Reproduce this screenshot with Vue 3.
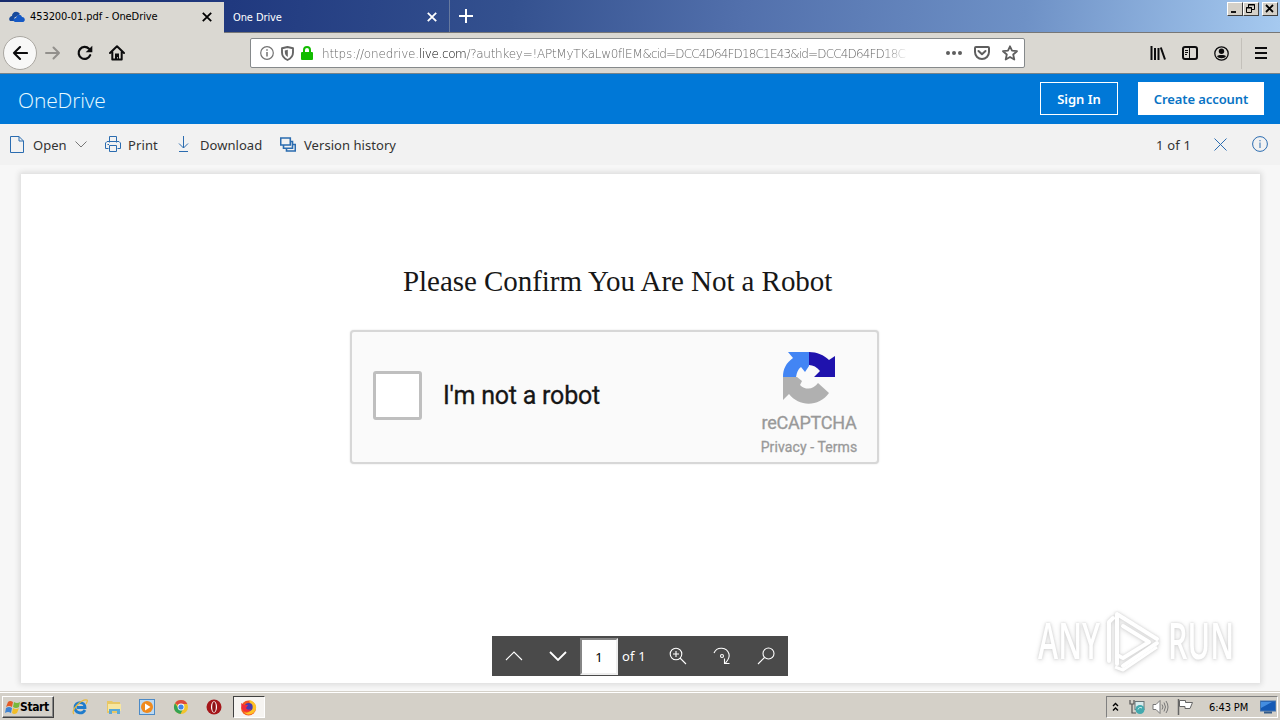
<template>
  <div class="screen">
    <header class="tabs">
      <div class="tab active">
        <svg class="cloud" width="16" height="12" viewBox="0 0 16 12">
          <path d="M1 10C-1 8 1 5 3 5C3 1 8-1 11 3L8 5L5 7V10Z" fill="#174a9c" />
          <path d="M6 11C3 10 4 7 7 7C8 3 12 3 13 6C16 6 17 10 14 11Z" fill="#1559c5" />
        </svg>
        <span class="tab-title t1">453200-01.pdf - OneDrive</span>
        <svg class="close" width="10" height="10" viewBox="0 0 10 10"><path d="M.8.8 9.2 9.2M9.2.8.8 9.2" /></svg>
      </div>
      <div class="tab other">
        <span class="tab-title t2">One Drive</span>
        <svg class="close" width="10" height="10" viewBox="0 0 10 10"><path d="M.8.8 9.2 9.2M9.2.8.8 9.2" /></svg>
      </div>
      <svg class="plus" width="14" height="14" viewBox="0 0 14 14"><path d="M7 0V14M0 7H14" /></svg>
      <div class="win-buttons">
        <span class="win"><svg width="13" height="11" viewBox="0 0 13 11"><path d="M3 9H8" /></svg></span>
        <span class="win"><svg width="13" height="11" viewBox="0 0 13 11"><path class="thin" d="M4.5 4V1.5H10.5V6.5H8M4 2H11M2.5 4.5H7.5V9.5H2.5ZM2 5H8" /></svg></span>
        <span class="win last"><svg width="13" height="11" viewBox="0 0 13 11"><path d="M3 2 10 9M10 2 3 9" /></svg></span>
      </div>
    </header>

    <nav class="nav">
      <span class="back">
        <svg width="16" height="16" viewBox="0 0 16 16"><path d="M15 8H2M8 2 2 8 8 14" fill="none" stroke="#0c0c0d" stroke-width="2.1" stroke-linecap="round" stroke-linejoin="round" /></svg>
      </span>
      <svg class="forward" width="16" height="16" viewBox="0 0 16 16"><path d="M1 8H14M8.5 2.5 14 8 8.5 13.5" fill="none" stroke="#92908c" stroke-width="2" stroke-linecap="round" stroke-linejoin="round" /></svg>
      <svg class="reload" width="16" height="16" viewBox="0 0 16 16">
        <path d="M13.2 10.2A6 6 0 1 1 12 3.8" fill="none" stroke="#0c0c0d" stroke-width="2.2" stroke-linecap="round" />
        <path d="M15.3.7V7.3H8.7Z" fill="#0c0c0d" />
      </svg>
      <svg class="home" width="16" height="16" viewBox="0 0 16 16">
        <path d="M1 8 8 1.3 15 8M3.3 7V14.6H12.7V7" fill="none" stroke="#0c0c0d" stroke-width="2" stroke-linejoin="round" stroke-linecap="round" />
        <path d="M6 15V8.5H10V15H8.8V12H8V15Z" fill="#0c0c0d" />
      </svg>
      <div class="urlbar">
        <svg width="14" height="14" viewBox="0 0 14 14"><circle cx="7" cy="7" r="6.3" fill="none" stroke="#737373" stroke-width="1.2" /><path d="M7 6V10.5M7 3.2V4.8" stroke="#737373" stroke-width="1.5" /></svg>
        <svg class="shield" width="13" height="15" viewBox="0 0 13 15"><path d="M6.5 1 12 2.2V6.5C12 10 9.8 12.5 6.5 14C3.2 12.5 1 10 1 6.5V2.2Z" fill="none" stroke="#666" stroke-width="1.9" stroke-linejoin="round" /><path d="M6.8 3.8V11C4.8 10 3.8 8 3.8 6V4.4Z" fill="#666" /></svg>
        <svg class="lock" width="12" height="14" viewBox="0 0 12 14"><path d="M3 7V4A3 3 0 0 1 9 4V7" fill="none" stroke="#12bc00" stroke-width="2" /><rect y="6" width="12" height="8" rx="1" fill="#12bc00" /></svg>
        <span class="url"><span class="scheme">https://onedrive.</span><span class="domain">live.com</span><span class="query">/?authkey=!APtMyTKaLw0flEM</span><span class="ids">&amp;cid=DCC4D64FD18C1E43&amp;id=DCC4D64FD18C</span></span>
        <svg class="dots" width="16" height="4" viewBox="0 0 16 4"><circle v-for="x in [2, 8, 14]" :key="x" :cx="x" cy="2" r="2" fill="#5e5e5e" /></svg>
        <svg class="pocket" width="16" height="14" viewBox="0 0 16 14"><path d="M2 1H14A1 1 0 0 1 15 2V6A7 7 0 0 1 1 6V2A1 1 0 0 1 2 1Z M4.5 5 8 8.3 11.5 5" fill="none" stroke="#5e5e5e" stroke-width="2" stroke-linecap="round" stroke-linejoin="round" /></svg>
        <svg width="16" height="16" viewBox="0 0 16 16"><path d="M8 1.3 10 5.7 15 6.2 11.2 9.5 12.3 14.5 8 12 3.7 14.5 4.8 9.5 1 6.2 6 5.7Z" fill="none" stroke="#5e5e5e" stroke-width="1.8" stroke-linejoin="round" /></svg>
      </div>
      <svg class="library" width="16" height="14" viewBox="0 0 16 14"><path d="M1.5 0V14M5 2V14M8.5 2V14M10.8 1.5 15 13.5" stroke="#0c0c0d" stroke-width="2" /></svg>
      <svg class="sidebar" width="16" height="14" viewBox="0 0 16 14"><rect x="1" y="1" width="14" height="12" rx="2" fill="none" stroke="#0c0c0d" stroke-width="2" /><path d="M7.5 1V13" stroke="#0c0c0d" /><path d="M3 4.5H6M3 6.5H6M3 8.5H5" stroke="#0c0c0d" /></svg>
      <svg class="account" width="15" height="15" viewBox="0 0 15 15"><circle cx="7.5" cy="7.5" r="6.7" fill="none" stroke="#0c0c0d" stroke-width="1.3" /><circle cx="7.5" cy="5.3" r="2.7" fill="#0c0c0d" /><path d="M3 10C4 8.5 11 8.5 12 10C11 13 4 13 3 10Z" fill="#0c0c0d" /></svg>
      <i class="divider"></i>
      <svg class="menu" width="12" height="12" viewBox="0 0 12 12"><path d="M0 1H12M0 6H12M0 11H12" stroke="#0c0c0d" stroke-width="2" /></svg>
    </nav>

    <div class="brandbar">
      <span class="brand">OneDrive</span>
      <button class="signin">Sign In</button>
      <button class="create">Create account</button>
    </div>

    <div class="commands">
      <svg class="i-open" width="14" height="17" viewBox="0 0 14 17"><path d="M.5.5H9L13.5 5V16.5H.5ZM9 .5V5H13.5" /></svg>
      <span class="c-open">Open</span>
      <svg class="i-chev" width="12" height="7" viewBox="0 0 12 7"><path class="gray" d="M.5.5 6 6 11.5.5" /></svg>
      <svg class="i-print" width="16" height="16" viewBox="0 0 16 16"><path d="M4.5 6.5V.5H11.5V6.5M3.5 12.5H.5V7L2 5.5H14L15.5 7V12.5H12.5M4.5 9.5H11.5V15.5H4.5ZM2.5 8.5H4" /></svg>
      <span class="c-print">Print</span>
      <svg class="i-down" width="11" height="16" viewBox="0 0 11 16"><path d="M5.5 0V12M1 7.5 5.5 12 10 7.5M1 15.5H10" /></svg>
      <span class="c-down">Download</span>
      <svg class="i-version" width="16" height="15" viewBox="0 0 16 15"><path class="bold" d="M.7 1H10.3V8H.7ZM10 4.5H12.5V11.3H3.5V8M13 7.5H15.3V14H6.5V11" /></svg>
      <span class="c-version">Version history</span>
      <span class="count">1 of 1</span>
      <svg class="i-x" width="13" height="13" viewBox="0 0 13 13"><path d="M.5.5 12.5 12.5M12.5.5.5 12.5" /></svg>
      <svg width="16" height="16" viewBox="0 0 16 16"><circle cx="8" cy="8" r="7.4" fill="none" stroke="#2b6cb0" /><path d="M8 6.5V12M8 4V5.3" /></svg>
    </div>

    <main class="viewer">
      <div class="page">
        <h1 class="title">Please Confirm You Are Not a Robot</h1>
        <div class="captcha">
          <span class="box"></span>
          <span class="label">I'm not a robot</span>
          <div class="logo">
            <svg width="54" height="54" viewBox="0 0 54 54">
              <path d="M27 2H6L11 8C4 13 1 19 1 27H14C15 22 16 19 19 17L23 22L27 16Z" fill="#4285f4" />
              <path d="M27 2C35 2 42 5 47 10L53 6V27H32L38 21C35 17 31 15 27 15Z" fill="#1f12ad" />
              <path d="M1 27H15L20 31L18 35C24 41 32 39 36 33L47 43C37 57 17 57 7 44L1 50Z" fill="#b0b0b0" />
            </svg>
            <span class="re">reCAPTCHA</span>
            <span class="terms">Privacy - Terms</span>
          </div>
        </div>
      </div>

      <div class="pager">
        <svg width="18" height="10" viewBox="0 0 18 10"><path d="M1 9 9 1 17 9" /></svg>
        <svg class="p-next" width="18" height="10" viewBox="0 0 18 10"><path class="strong" d="M1 1 9 9 17 1" /></svg>
        <span class="current">1</span>
        <span class="of">of 1</span>
        <svg class="p-zoom" width="18" height="18" viewBox="0 0 18 18"><circle cx="7" cy="7" r="5.8" /><path d="M11 11 17 17M7 4V10M4 7H10" /></svg>
        <svg class="p-rotate" width="18" height="18" viewBox="0 0 18 18"><path d="M1 6C4-1 14 0 16 7C17 11 15 13 12.5 16M11.5 11.5V16.5H16.5" /><circle cx="9" cy="9" r="1.5" /></svg>
        <svg class="p-find" width="18" height="18" viewBox="0 0 18 18"><circle cx="11.5" cy="6.5" r="5.5" /><path d="M7.5 10.5 1 17" /></svg>
      </div>

      <div class="watermark">
        <span class="w-any">ANY</span>
        <svg width="58" height="64" viewBox="0 0 58 64">
          <path d="M6 52V13L10 9M14 55V5L54 30M20 57 54 34M14 5V46L20 49 46 33 20 17" fill="none" stroke="#fff" stroke-width="4" stroke-linejoin="round" stroke-linecap="round" />
          <path d="M12 58 20 61 54 38" fill="none" stroke="#fff" stroke-width="3" stroke-linejoin="round" />
        </svg>
        <span class="w-run">RUN</span>
      </div>
    </main>

    <footer class="taskbar">
      <div class="start">
        <svg width="16" height="15" viewBox="0 0 16 15">
          <path d="M3 2Q5 0 8 2L7 7Q4 5 1 7Z" fill="#e45b26" />
          <path d="M9 2Q12 4 15 2L14 7Q11 9 8 7Z" fill="#78b83a" />
          <path d="M1 8Q4 6 7 8L6 13Q3 11 0 13Z" fill="#3f83d2" />
          <path d="M8 8Q11 10 14 8L12 13Q9 15 7 13Z" fill="#f2bd27" />
        </svg>
        <span>Start</span>
      </div>
      <div class="apps">
        <svg width="16" height="16" viewBox="0 0 16 16">
          <path d="M13 11C10 16 3 14 3 8.5C3 2 13 2 13 8.5H5" fill="none" stroke="#1f7ccc" stroke-width="2.8" />
          <path d="M2 15C-2 12 9 0 15 1C16 2 15 3 14 5" fill="none" stroke="#e9b93a" stroke-width="1.2" />
        </svg>
        <svg width="16" height="16" viewBox="0 0 16 16">
          <path d="M1 2H6L7 3H14V14H1Z" fill="#e8c765" />
          <path d="M2 5H15V12H2Z" fill="#f7e6a0" />
          <path d="M3 15V10H14V15H11V12H6V15Z" fill="#5aa9d6" />
        </svg>
        <svg width="16" height="16" viewBox="0 0 16 16">
          <rect x=".5" y=".5" width="15" height="15" fill="#bcd9f2" stroke="#4c8ac6" />
          <circle cx="8" cy="8" r="6" fill="#f08a1d" /><path d="M6 4.5 11.5 8 6 11.5Z" fill="#fff" />
        </svg>
        <svg width="16" height="16" viewBox="0 0 16 16">
          <circle cx="8" cy="8" r="7" fill="#f3c42d" />
          <path d="M8 8 2 4.3A7 7 0 0 1 14.3 5H8Z" fill="#dd4b3e" />
          <path d="M2 4.3A7 7 0 0 0 7.5 15L10 10 6 10Z" fill="#35a354" />
          <circle cx="8" cy="8" r="3.4" fill="#fff" /><circle cx="8" cy="8" r="2.6" fill="#4285e8" />
        </svg>
        <svg width="16" height="16" viewBox="0 0 16 16"><circle cx="8" cy="8" r="7.5" fill="#a5161a" /><ellipse cx="8" cy="8" rx="3" ry="5.7" fill="#fff" /><ellipse cx="8" cy="8" rx="1.8" ry="5" fill="#8d1115" /></svg>
        <div class="running">
          <svg width="17" height="17" viewBox="0 0 17 17">
            <circle cx="8.5" cy="9" r="7.5" fill="#f4571f" />
            <path d="M9 1C15 2 18 8 15 12C13 16 7 17 4 13C8 15 12 12 11 8Z" fill="#ffc226" />
            <circle cx="8.7" cy="8" r="4" fill="#4a3bb0" />
            <path d="M1 4 4 6 8 6 6 9C7 11 9 11 11 10C9 14 4 13 2 10Z" fill="#f22b3c" />
          </svg>
        </div>
      </div>
      <div class="tray">
        <svg width="7" height="10" viewBox="0 0 7 10"><path d="M1 4 3.5 1.5 6 4M1 8.5 3.5 6 6 8.5" fill="none" stroke="#000" stroke-width="1.4" /></svg>
        <svg class="net" width="16" height="16" viewBox="0 0 16 16"><path d="M1 1V5H5V1M3 5V14H7" fill="none" stroke="#555" stroke-width="1.2" /><rect x="6" y="2.5" width="9" height="8" fill="#d8ebed" stroke="#687477" /><circle cx="11" cy="10.5" r="4.5" fill="#43a9ae" /><path d="M9 10.5A2.5 2.5 0 0 1 13 9" fill="none" stroke="#d4f3f2" /></svg>
        <svg class="sound" width="17" height="16" viewBox="0 0 17 16"><path d="M1 5.5H4L8 1.5V14.5L4 10.5H1Z" fill="#fff" stroke="#777" /><path d="M10 5.5Q12 8 10 10.5M12 3.5Q15 8 12 12.5M14 2Q18 8 14 14" fill="none" stroke="#777" /></svg>
        <svg class="flag" width="17" height="16" viewBox="0 0 17 16"><path d="M1.5 0V16" stroke="#666" stroke-width="1.5" /><path d="M2.5 1.5H8.5V3.5H15.5L13 9.5H8V7.5H2.5Z" fill="#fff" stroke="#666" /></svg>
        <span class="clock">6:43 PM</span>
        <svg width="16" height="14" viewBox="0 0 16 14"><rect x=".5" y="1" width="15" height="10" fill="#1459b5" stroke="#4575ad" /><path d="M1 2H12L1 8Z" fill="#448de0" /><path d="M4 12.5H12" stroke="#335b89" stroke-width="2" /></svg>
      </div>
    </footer>
  </div>
</template>

<script setup>
</script>

<style>
body {
  overflow: hidden;
}
</style>

<style scoped>
.screen {
  width: 1280px;
  height: 720px;
  display: flex;
  flex-direction: column;
  overflow: hidden;
  background: #f7f7f7;
  font-family: "DejaVu Sans Condensed", "DejaVu Sans", sans-serif;
}
.screen * {
  box-sizing: border-box;
}
svg {
  display: block;
  flex: none;
}
span {
  white-space: nowrap;
}
.tabs {
  flex: none;
  height: 33px;
  display: flex;
  background: linear-gradient(97deg, #172b6c 0%, #20397f 18%, #34518f 40%, #5270ac 58%, #6e91c6 80%, #a6caf0 100%);
  border-bottom: 1px solid #777;
}
.tab {
  display: flex;
  align-items: center;
  height: 32px;
}
.active {
  width: 224px;
  height: 31px;
  margin-top: 2px;
  padding: 0 12px 2px 9px;
  background: #dad8d2;
}
.cloud {
  margin-right: 5px;
}
.other {
  width: 226px;
  padding: 2px 12px 0 9px;
  border-right: 1px solid #66799f;
  color: #fff;
}
.tab-title {
  padding-top: 1px;
  font-size: 11px;
  line-height: 14px;
}
.t1 {
  letter-spacing: -0.08px;
}
.t2 {
  letter-spacing: -0.1px;
}
.close {
  margin-left: auto;
  fill: none;
  stroke: currentColor;
  stroke-width: 1.8;
}
.plus {
  margin: 9px 0 0 9px;
  stroke: #fff;
  stroke-width: 2;
}
.win-buttons {
  display: flex;
  height: 14px;
  margin: 2px 2px 0 auto;
}
.win {
  width: 16px;
  height: 14px;
  background: #d4d0c8;
  border: 1px solid;
  border-color: #fff #404040 #404040 #fff;
}
.last {
  margin-left: 3px;
}
.win svg {
  stroke: #000;
  stroke-width: 1.8;
  fill: none;
}
.win .thin {
  stroke-width: 1;
}
.nav {
  flex: none;
  height: 41px;
  display: flex;
  align-items: center;
  background: #dad8d2;
  border-bottom: 1px solid #77838a;
}
.back {
  width: 34px;
  height: 34px;
  margin-left: 3px;
  display: flex;
  align-items: center;
  justify-content: center;
  border: 1px solid #aaa7a1;
  border-radius: 50%;
  background: #f8f8f7;
}
.forward {
  margin-left: 8px;
}
.reload,
.home {
  margin-left: 16px;
}
.urlbar {
  display: flex;
  align-items: center;
  width: 775px;
  height: 30px;
  margin-left: 125px;
  padding: 0 6px 0 9px;
  border: 1px solid #85898b;
  border-radius: 2px;
  background: #fff;
}
.shield {
  margin-left: 7px;
}
.lock {
  margin-left: 7px;
}
.url {
  width: 590px;
  margin-left: 9px;
  padding-top: 1px;
  color: #666;
  font-family: "DejaVu Sans Light", "DejaVu Sans", sans-serif;
  font-weight: 200;
  font-size: 12px;
  -webkit-mask-image: linear-gradient(90deg, #000 95%, transparent);
  mask-image: linear-gradient(90deg, #000 95%, transparent);
}
.scheme {
  letter-spacing: -0.15px;
}
.domain {
  color: #000;
  font-weight: 400;
  letter-spacing: -0.4px;
}
.query {
  letter-spacing: -0.27px;
}
/* long hex ids run tighter than the rest of the address */
.ids {
  letter-spacing: -0.84px;
}
.dots {
  margin-left: auto;
}
.pocket {
  margin: 0 12px;
}
.library {
  margin-left: 125px;
}
.sidebar,
.account {
  margin-left: 16px;
}
.divider {
  width: 1px;
  height: 31px;
  margin-left: 12px;
  background: #c3c0ba;
}
.menu {
  margin-left: 13px;
}
.brandbar {
  flex: none;
  height: 50px;
  display: flex;
  align-items: center;
  padding: 0 16px 2px 18px;
  background: #0078d7;
}
.brand {
  margin-right: auto;
  padding-top: 3px;
  color: #e7faff;
  font-family: "Open Sans", sans-serif;
  font-weight: 300;
  font-size: 21px;
  letter-spacing: -0.15px;
}
.signin,
.create {
  height: 33px;
  padding: 2px 0 0;
  border: 1px solid #fff;
  border-radius: 0;
  font-family: "Noto Sans", sans-serif;
  font-size: 13px;
  font-weight: 600;
}
.signin {
  width: 78px;
  margin-right: 20px;
  background: #0078d7;
  color: #fff;
}
.create {
  width: 126px;
  background: #fff;
  color: #0873c4;
  letter-spacing: -0.1px;
}
.commands {
  flex: none;
  height: 41px;
  display: flex;
  align-items: center;
  padding: 0 12px 1px 10px;
  background: #f2f2f2;
  color: #333;
  font-family: "Noto Sans", sans-serif;
  font-size: 13px;
}
.commands span {
  padding-top: 1px;
}
.commands path {
  fill: none;
  stroke: #2b6cb0;
  stroke-width: 1;
}
.commands .gray {
  stroke: #777;
}
.commands .bold {
  stroke-width: 1.6;
}
.c-open {
  width: 34px;
  margin-left: 9px;
}
.i-chev {
  margin-left: 8px;
}
.i-print {
  margin-left: 18px;
}
.c-print {
  width: 30px;
  margin-left: 7px;
  letter-spacing: 0.1px;
}
.i-down {
  margin-left: 20px;
}
.c-down {
  width: 62px;
  margin-left: 11px;
  letter-spacing: 0.05px;
}
.i-version {
  margin-left: 18px;
}
.c-version {
  margin-left: 8px;
  letter-spacing: 0.05px;
}
.count {
  width: 36px;
  margin-left: auto;
  letter-spacing: 0.2px;
}
.i-x {
  margin: 0 25px 0 22px;
}
.viewer {
  position: relative;
  flex: none;
  height: 526px;
  padding: 9px 20px 0 21px;
}
.page {
  height: 509px;
  padding-top: 89px;
  background: #fff;
  box-shadow: 0 0 5px 2px #ddd;
}
.title {
  width: 432px;
  height: 36px;
  margin: 0 0 0 382px;
  font: 400 29px/36px "Liberation Serif", serif;
  letter-spacing: -0.05px;
  white-space: nowrap;
  color: #171717;
}
.captcha {
  display: flex;
  align-items: center;
  width: 529px;
  height: 134px;
  margin: 31px 0 0 329px;
  padding: 0 19px 0 21px;
  border: 2px solid #d7d7d7;
  border-radius: 4px;
  background: #fafafa;
  box-shadow: 0 0 2px #e1e1e1;
  font-family: Roboto, sans-serif;
}
.box {
  width: 49px;
  height: 49px;
  margin-top: -4px;
  border: 3px solid #bfbfbf;
  border-radius: 3px;
  background: #fff;
}
.label {
  margin: -3px 0 0 21px;
  color: #161616;
  font-size: 25px;
  letter-spacing: -0.22px;
  -webkit-text-stroke: 0.3px #161616;
}
.logo {
  display: flex;
  flex-direction: column;
  align-items: center;
  width: 98px;
  height: 130px;
  margin-left: auto;
  padding-top: 18px;
  color: #999;
  -webkit-text-stroke: 0.3px #999;
}
.re {
  margin-top: 8px;
  font-size: 18px;
  line-height: 22px;
  letter-spacing: -0.25px;
}
.terms {
  margin-top: 4px;
  font-size: 14px;
  line-height: 18px;
  letter-spacing: 0.1px;
}
.pager {
  position: absolute;
  left: 492px;
  top: 471px;
  width: 296px;
  height: 40px;
  padding-left: 13px;
  display: flex;
  align-items: center;
  background: #4a4a4a;
  color: #fff;
  font: 13px "Noto Sans", sans-serif;
}
.pager svg {
  fill: none;
  stroke: #fff;
  stroke-width: 1.1;
}
.pager .strong {
  stroke-width: 1.8;
}
.p-next {
  margin-left: 26px;
}
.current {
  width: 38px;
  height: 37px;
  margin-left: 13px;
  padding-top: 1px;
  border: 2px solid;
  border-color: #858585 #eee #eee #858585;
  background: #fff;
  color: #000;
  text-align: center;
  line-height: 33px;
}
.of {
  width: 24px;
  margin-left: 4px;
  letter-spacing: 0.2px;
}
.p-zoom {
  margin-left: 23px;
}
.p-rotate,
.p-find {
  margin-left: 26px;
}
.watermark {
  position: absolute;
  left: 1038px;
  top: 444px;
  width: 196px;
  height: 64px;
  display: flex;
  align-items: center;
  filter: drop-shadow(0 0 1px #d2d2d2) drop-shadow(0 1px 2px #ddd);
  color: #fff;
  font: 600 50px/60px "Open Sans", sans-serif;
}
/* the wordmark is set in a very narrow face */
.w-any,
.w-run {
  width: 65px;
  margin-top: -2px;
  transform: scaleX(0.61);
  transform-origin: left;
}
.w-run {
  margin-left: 7px;
}
.taskbar {
  flex: none;
  height: 29px;
  display: flex;
  align-items: center;
  padding: 2px 2px 0;
  background: #d4d0c8;
  border-top: 1px solid #d4d0c8;
  box-shadow: inset 0 1px #fff;
}
.start {
  display: flex;
  align-items: center;
  width: 52px;
  height: 22px;
  padding-left: 2px;
  border: 1px solid;
  border-color: #fff #404040 #404040 #fff;
  box-shadow: inset -1px -1px #888;
  font-weight: 700;
  font-size: 12px;
  letter-spacing: -0.4px;
}
.start span {
  margin-left: -1px;
}
.apps {
  display: flex;
  align-items: center;
  gap: 17.6px;
  margin-left: 18px;
}
.running {
  display: flex;
  align-items: center;
  justify-content: center;
  width: 32px;
  height: 22px;
  margin-left: -7px;
  border: 1px solid;
  border-color: #404040 #fff #fff #404040;
  background: #f6f4f1;
}
.tray {
  display: flex;
  align-items: center;
  width: 172px;
  height: 22px;
  margin-left: auto;
  padding: 0 0 0 5px;
  border: 1px solid;
  border-color: #808080 #fff #fff #808080;
}
.net {
  margin-left: 10px;
}
.sound {
  margin-left: 7px;
}
.flag {
  margin-left: 8px;
}
.clock {
  width: 41px;
  margin: 0 10px 0 15px;
  font-size: 11px;
  letter-spacing: -0.1px;
}
</style>
